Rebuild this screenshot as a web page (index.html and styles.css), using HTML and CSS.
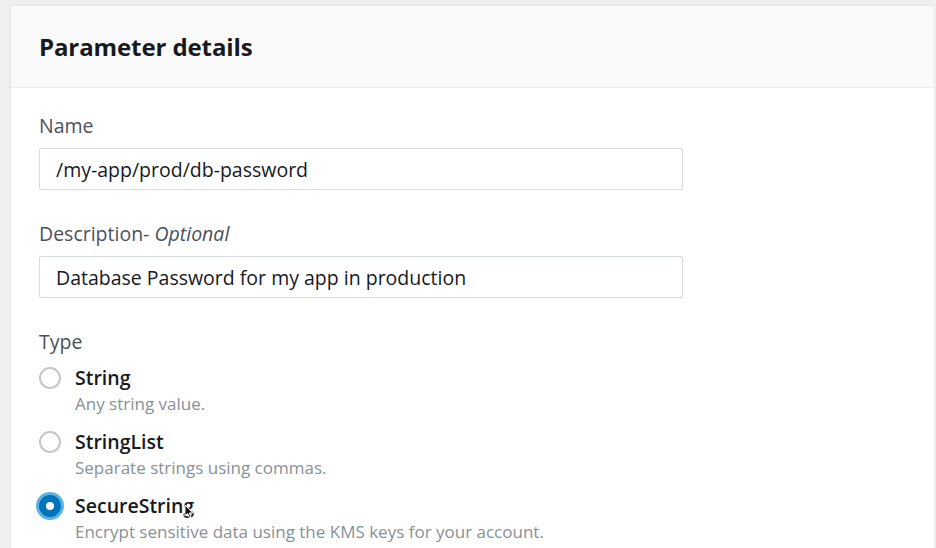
FILE: index.html
```html
<!DOCTYPE html>
<html>
<head>
<meta charset="utf-8">
<link rel="stylesheet" href="styles.css">
</head>
<body>
<div class="card">
  <div class="card-header"><h2 class="title">Parameter details</h2></div>
  <div class="card-body">
    <div class="field">
      <div class="label">Name</div>
      <div class="input">/my-app/prod/db-password</div>
    </div>
    <div class="field">
      <div class="label">Description- <i>Optional</i></div>
      <div class="input">Database Password for my app in production</div>
    </div>
    <div class="field type-field">
      <div class="label">Type</div>
      <div class="radios">
        <div class="radio">
          <span class="dot"></span>
          <div class="radio-text">
            <div class="radio-title">String</div>
            <div class="radio-desc">Any string value.</div>
          </div>
        </div>
        <div class="radio">
          <span class="dot"></span>
          <div class="radio-text">
            <div class="radio-title">StringList</div>
            <div class="radio-desc">Separate strings using commas.</div>
          </div>
        </div>
        <div class="radio">
          <span class="dot checked"></span>
          <div class="radio-text">
            <div class="radio-title">SecureString<svg class="cursor" width="10" height="15" viewBox="0 0 10 15"><path d="M1 1 L1 12 L3.6 9.6 L5.6 14 L7.2 13.3 L5.3 9 L8.8 9 Z" fill="#111" stroke="#fff" stroke-width="1"/></svg></div>
            <div class="radio-desc">Encrypt sensitive data using the KMS keys for your account.</div>
          </div>
        </div>
      </div>
    </div>
  </div>
</div>
</body>
</html>
```

FILE: styles.css
```css
html, body {
  margin: 0;
  padding: 0;
  background: #efefef;
  font-family: "Open Sans", "Noto Sans", sans-serif;
  color: #16191f;
}
.card {
  margin: 5px 0 0 10px;
  width: 923px;
  height: 560px;
  background: #fff;
  border: 1px solid #e3e3e3;
  border-right-color: #e8e8e8;
}
.card-header {
  height: 81px;
  background: #fafafa;
  border-bottom: 1px solid #ececec;
  padding-left: 28px;
  display: flex;
  align-items: center;
}
.title {
  margin: 0;
  font-size: 24px;
  font-weight: 700;
  color: #16191f;
  letter-spacing: -0.1px;
}
.card-body {
  padding: 25px 0 0 28px;
}
.field {
  margin-bottom: 31px;
}
.label {
  font-size: 19.5px;
  line-height: 26px;
  color: #4a515b;
  margin-bottom: 9px;
}
.label i {
  font-style: italic;
}
.input {
  width: 618px;
  height: 40px;
  border: 1px solid #d5dbdb;
  border-radius: 2px;
  padding: 0 8px 0 16px;
  box-sizing: content-box;
  display: flex;
  align-items: center;
  font-size: 19.5px;
  color: #16191f;
}
.type-field .label {
  margin-bottom: 9px;
}
.radios {
  display: flex;
  flex-direction: column;
  gap: 13px;
}
.radio {
  display: flex;
  align-items: flex-start;
}
.dot {
  width: 18px;
  height: 18px;
  border: 2px solid #c4c8c8;
  border-radius: 50%;
  margin: 3px 14px 0 0;
  box-sizing: content-box;
  flex: none;
  background: #fff;
}
.dot.checked {
  width: 8px;
  height: 8px;
  border: 7px solid #0073bb;
  box-shadow: 0 0 0 3px #5ab4e0;
  margin-top: 3px;
}
.radio-title {
  font-size: 19.5px;
  line-height: 28px;
  font-weight: 600;
  color: #16191f;
  position: relative;
}
.radio-desc {
  font-size: 17px;
  line-height: 23px;
  color: #879196;
}
.cursor {
  position: absolute;
  left: 109px;
  top: 12px;
}
```
